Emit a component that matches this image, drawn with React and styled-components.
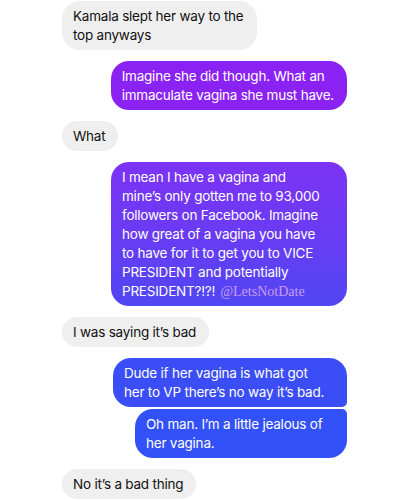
import React from 'react'
import styled, { createGlobalStyle } from 'styled-components'

const GlobalStyle = createGlobalStyle`
  html, body {
    margin: 0;
    padding: 0;
    background: #ffffff;
    overflow: hidden;
  }
`

const Thread = styled.div`
  display: flex;
  flex-direction: column;
  gap: 11px;
  padding: 1px 53px 0 62px;
  width: 400px;
  height: 500px;
  box-sizing: border-box;
  font-family: Inter, 'Liberation Sans', Arial, sans-serif;
  font-size: 13.5px;
  line-height: 19px;
  letter-spacing: -0.22px;
`

const Row = styled.div`
  display: flex;
  justify-content: ${p => (p.$mine ? 'flex-end' : 'flex-start')};
  margin-top: ${p => (p.$grouped ? '-9px' : '0')};
`

const Bubble = styled.div`
  box-sizing: border-box;
  min-width: ${p => p.$minWidth || 0}px;
  padding: 5.5px 13px 5.5px 11px;
  border-radius: 18px;
  white-space: nowrap;
  color: ${p => (p.$mine ? '#ffffff' : '#111111')};
  background: ${p => p.$bg || '#efefef'};
  ${p => p.$tail === 'bottom' && 'border-bottom-right-radius: 5px;'}
  ${p => p.$tail === 'top' && 'border-top-right-radius: 5px;'}
`

const Watermark = styled.span`
  margin-left: 5px;
  font-family: 'Liberation Serif', 'Times New Roman', serif;
  font-size: 14px;
  letter-spacing: 0;
  color: #c99cf2;
`

const messages = [
  { lines: ['Kamala slept her way to the', 'top anyways'] },
  {
    mine: true,
    minWidth: 234,
    bg: '#8a22f3',
    lines: ['Imagine she did though. What an', 'immaculate vagina she must have.']
  },
  { lines: ['What'] },
  {
    mine: true,
    minWidth: 236,
    bg: 'linear-gradient(180deg, #7c33f5 0%, #6a3bf4 50%, #5046f3 100%)',
    lines: [
      'I mean I have a vagina and',
      'mine’s only gotten me to 93,000',
      'followers on Facebook. Imagine',
      'how great of a vagina you have',
      'to have for it to get you to VICE',
      'PRESIDENT and potentially',
      'PRESIDENT?!?!'
    ],
    watermark: '@LetsNotDate'
  },
  { lines: ['I was saying it’s bad'] },
  {
    mine: true,
    minWidth: 234,
    bg: '#3b4df6',
    tail: 'bottom',
    lines: ['Dude if her vagina is what got', 'her to VP there’s no way it’s bad.']
  },
  {
    mine: true,
    grouped: true,
    minWidth: 212,
    bg: '#3351f8',
    tail: 'top',
    lines: ['Oh man. I’m a little jealous of', 'her vagina.']
  },
  { lines: ['No it’s a bad thing'] }
]

export default function App () {
  return (
    <>
      <GlobalStyle />
      <Thread>
        {messages.map((m, i) => (
          <Row key={i} $mine={m.mine} $grouped={m.grouped}>
            <Bubble $mine={m.mine} $bg={m.bg} $tail={m.tail} $minWidth={m.minWidth}>
              {m.lines.map((line, j) => (
                <div key={j}>
                  {line}
                  {m.watermark && j === m.lines.length - 1 && (
                    <Watermark>{m.watermark}</Watermark>
                  )}
                </div>
              ))}
            </Bubble>
          </Row>
        ))}
      </Thread>
    </>
  )
}
